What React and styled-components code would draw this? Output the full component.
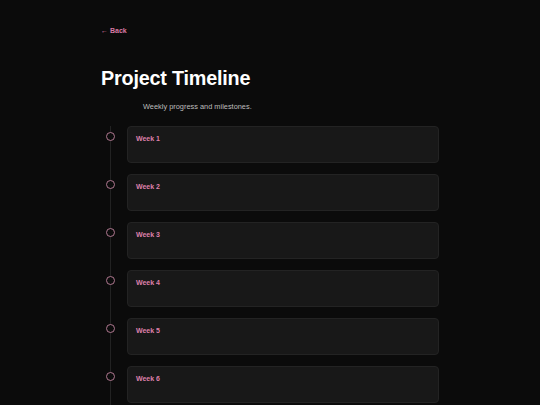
import styled, { createGlobalStyle } from "styled-components";

const GlobalStyle = createGlobalStyle`
  html, body {
    margin: 0;
    padding: 0;
    background: #0b0b0b;
    font-family: "Liberation Sans", Arial, sans-serif;
  }
`;

const Page = styled.div`
  min-height: 405px;
  background: #0b0b0b;
  overflow: hidden;
`;

const Container = styled.div`
  width: 338px;
  margin: 0 auto;
  padding-top: 19px;
`;

const BackLink = styled.a`
  display: inline-block;
  color: #d97aa5;
  font-size: 7px;
  font-weight: 600;
  line-height: 10px;
  text-decoration: none;
  cursor: pointer;
`;

const Title = styled.h1`
  margin: 28px 0 0;
  color: #ffffff;
  font-size: 19.8px;
  font-weight: 700;
  line-height: 26px;
  letter-spacing: -0.2px;
`;

const Subtitle = styled.p`
  margin: 11px 0 0 42px;
  color: #bdbdbd;
  font-size: 7.4px;
  line-height: 10px;
`;

const Timeline = styled.div`
  position: relative;
  margin-top: 14px;
  display: flex;
  flex-direction: column;
  gap: 11px;

  &::before {
    content: "";
    position: absolute;
    left: 9px;
    top: 0;
    bottom: -40px;
    width: 1px;
    background: #222222;
  }
`;

const Item = styled.div`
  position: relative;
  display: flex;
  align-items: flex-start;
  padding-left: 26px;
`;

const Dot = styled.span`
  position: absolute;
  left: 5px;
  top: 6px;
  width: 7px;
  height: 7px;
  border: 1.3px solid #b07890;
  border-radius: 50%;
  background: #0b0b0b;
`;

const Card = styled.div`
  flex: 1;
  height: 37px;
  box-sizing: border-box;
  padding: 7px 8px;
  background: #181818;
  border: 1px solid #232323;
  border-radius: 4px;
`;

const WeekLabel = styled.div`
  color: #df80ab;
  font-size: 7px;
  font-weight: 700;
  line-height: 9px;
`;

const weeks = [1, 2, 3, 4, 5, 6];

export default function App() {
  return (
    <Page>
      <GlobalStyle />
      <Container>
        <BackLink>← Back</BackLink>
        <Title>Project Timeline</Title>
        <Subtitle>Weekly progress and milestones.</Subtitle>
        <Timeline>
          {weeks.map((w) => (
            <Item key={w}>
              <Dot />
              <Card>
                <WeekLabel>Week {w}</WeekLabel>
              </Card>
            </Item>
          ))}
        </Timeline>
      </Container>
    </Page>
  );
}
